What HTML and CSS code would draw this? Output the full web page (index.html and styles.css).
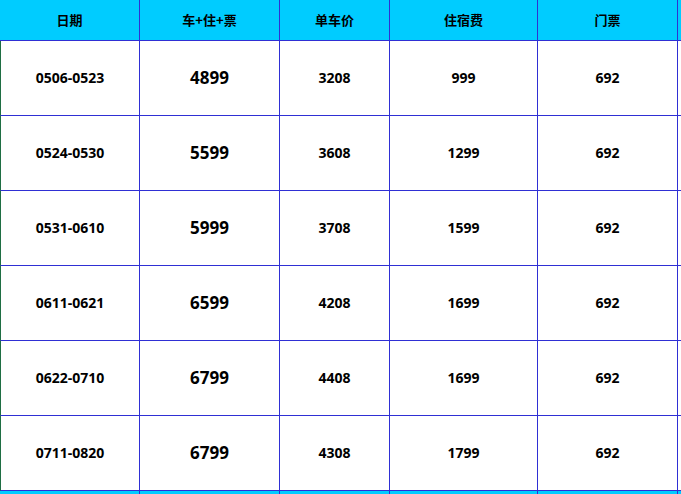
FILE: index.html
```html
<!DOCTYPE html>
<html lang="zh">
<head>
<meta charset="utf-8">
<link rel="stylesheet" href="styles.css">
</head>
<body>
<div class="sheet">
  <div class="cell head first">日期</div>
  <div class="cell head">车+住+票</div>
  <div class="cell head">单车价</div>
  <div class="cell head">住宿费</div>
  <div class="cell head">门票</div>
  <div class="cell head tail"></div>

  <div class="cell first">0506-0523</div>
  <div class="cell big">4899</div>
  <div class="cell">3208</div>
  <div class="cell">999</div>
  <div class="cell">692</div>
  <div class="cell tail"></div>

  <div class="cell first">0524-0530</div>
  <div class="cell big">5599</div>
  <div class="cell">3608</div>
  <div class="cell">1299</div>
  <div class="cell">692</div>
  <div class="cell tail"></div>

  <div class="cell first">0531-0610</div>
  <div class="cell big">5999</div>
  <div class="cell">3708</div>
  <div class="cell">1599</div>
  <div class="cell">692</div>
  <div class="cell tail"></div>

  <div class="cell first">0611-0621</div>
  <div class="cell big">6599</div>
  <div class="cell">4208</div>
  <div class="cell">1699</div>
  <div class="cell">692</div>
  <div class="cell tail"></div>

  <div class="cell first">0622-0710</div>
  <div class="cell big">6799</div>
  <div class="cell">4408</div>
  <div class="cell">1699</div>
  <div class="cell">692</div>
  <div class="cell tail"></div>

  <div class="cell first">0711-0820</div>
  <div class="cell big">6799</div>
  <div class="cell">4308</div>
  <div class="cell">1799</div>
  <div class="cell">692</div>
  <div class="cell tail"></div>

  <div class="cell foot first"></div>
  <div class="cell foot"></div>
  <div class="cell foot"></div>
  <div class="cell foot"></div>
  <div class="cell foot"></div>
  <div class="cell foot tail"></div>
</div>
</body>
</html>
```

FILE: styles.css
```css
html, body {
  margin: 0;
  padding: 0;
  background: #ffffff;
  overflow: hidden;
}

.sheet {
  display: grid;
  grid-template-columns: 140px 140px 110px 148px 140px 3px;
  grid-template-rows: 41px repeat(6, 75px) 20px;
  width: 681px;
  font-family: "Open Sans", "Noto Sans CJK SC", sans-serif;
  font-weight: 700;
  font-size: 14px;
  color: #000000;
}

.cell {
  box-sizing: border-box;
  display: flex;
  align-items: center;
  justify-content: center;
  padding-bottom: 2px;
  border-right: 1px solid #2f2fd4;
  border-bottom: 1px solid #2f2fd4;
  background: #ffffff;
}

.cell.first {
  border-left: 1px solid #1f6e43;
}

.cell.tail {
  border-right: none;
}

.head {
  background: #00ccff;
  font-family: "Noto Sans CJK SC", sans-serif;
  font-size: 13px;
  padding-bottom: 1px;
}

.head.first {
  border-left: none;
}

.big {
  font-size: 17px;
}

.foot {
  background: #00ccff;
  border-bottom: none;
}

.foot.first {
  border-left: none;
}
```
